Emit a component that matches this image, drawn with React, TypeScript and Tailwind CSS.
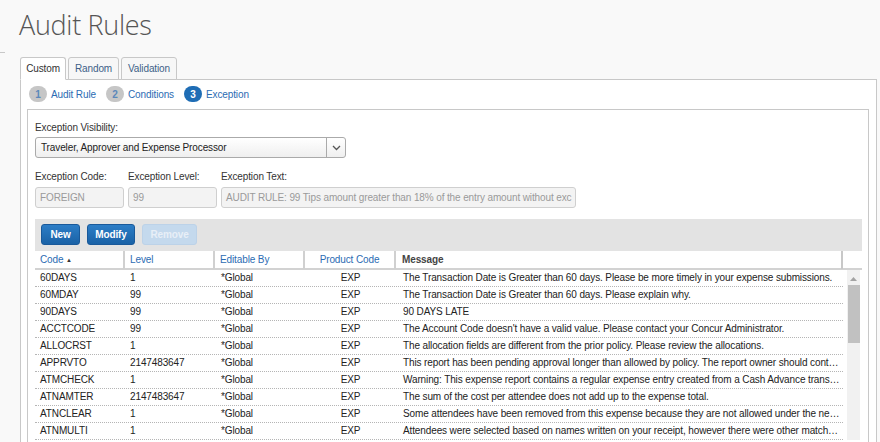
import React from "react";

type Rule = {
  code: string;
  level: string;
  editableBy: string;
  product: string;
  message: string;
};

const RULES: Rule[] = [
  { code: "60DAYS", level: "1", editableBy: "*Global", product: "EXP", message: "The Transaction Date is Greater than 60 days. Please be more timely in your expense submissions." },
  { code: "60MDAY", level: "99", editableBy: "*Global", product: "EXP", message: "The Transaction Date is Greater than 60 days. Please explain why." },
  { code: "90DAYS", level: "99", editableBy: "*Global", product: "EXP", message: "90 DAYS LATE" },
  { code: "ACCTCODE", level: "99", editableBy: "*Global", product: "EXP", message: "The Account Code doesn't have a valid value. Please contact your Concur Administrator." },
  { code: "ALLOCRST", level: "1", editableBy: "*Global", product: "EXP", message: "The allocation fields are different from the prior policy. Please review the allocations." },
  { code: "APPRVTO", level: "2147483647", editableBy: "*Global", product: "EXP", message: "This report has been pending approval longer than allowed by policy. The report owner should cont…" },
  { code: "ATMCHECK", level: "1", editableBy: "*Global", product: "EXP", message: "Warning: This expense report contains a regular expense entry created from a Cash Advance trans…" },
  { code: "ATNAMTER", level: "2147483647", editableBy: "*Global", product: "EXP", message: "The sum of the cost per attendee does not add up to the expense total." },
  { code: "ATNCLEAR", level: "1", editableBy: "*Global", product: "EXP", message: "Some attendees have been removed from this expense because they are not allowed under the ne…" },
  { code: "ATNMULTI", level: "1", editableBy: "*Global", product: "EXP", message: "Attendees were selected based on names written on your receipt, however there were other match…" },
];

const COLS = "grid grid-cols-[90px_90px_90px_91px_447px]";

function Step({ n, label, active }: { n: number; label: string; active?: boolean }) {
  return (
    <div className="flex items-center gap-[4px]">
      <span
        className={
          active
            ? "flex h-[16px] w-[18px] items-center justify-center rounded-full bg-[#1f6db5] text-[10px] font-bold text-white"
            : "flex h-[16px] w-[18px] items-center justify-center rounded-full bg-[#c6c6c6] text-[10px] font-bold text-[#5b88ba]"
        }
      >
        {n}
      </span>
      <span className="text-[#2b6cb3]">{label}</span>
    </div>
  );
}

function Tab({ label, active, w }: { label: string; active?: boolean; w: string }) {
  return (
    <div
      className={
        (active
          ? "relative bg-white border-b-white text-[#333] "
          : "bg-[#f7f7f7] text-[#3d5f87] ") +
        w +
        " h-[23px] border border-[#c8c8c8] rounded-t-[3px] text-center leading-[22px]"
      }
    >
      {label}
    </div>
  );
}

function App() {
  return (
    <div className="h-[442px] overflow-hidden bg-[#f9f9f9] font-['Liberation_Sans',Arial,sans-serif] text-[10px] tracking-[-0.12px] text-[#333]">
      {/* Title */}
      <div className="h-[52px] pl-[19px] pt-[8px]">
        <h1 className="font-['Open_Sans',sans-serif] text-[27px] font-light leading-[34px] tracking-[-0.3px] text-[#555]">
          Audit Rules
        </h1>
      </div>
      <div className="h-px w-[5px] bg-[#c8c8c8]" />

      {/* Tabs */}
      <div className="relative z-10 -mb-px mt-[4px] ml-[20px] flex gap-[2px]">
        <Tab label="Custom" active w="w-[46px]" />
        <Tab label="Random" w="w-[51px]" />
        <Tab label="Validation" w="w-[56px]" />
      </div>

      <div className="ml-[20px] h-[400px] w-[857px] border border-[#c8c8c8] bg-white">
        {/* Steps */}
        <div className="flex h-[29px] items-center gap-[10px] pb-[1px] pl-[8px]">
          <Step n={1} label="Audit Rule" />
          <Step n={2} label="Conditions" />
          <Step n={3} label="Exception" active />
        </div>

        <div className="ml-[6px] h-[400px] w-[842px] border border-[#c8c8c8] pl-[7px] pt-[11px]">
          <div className="leading-[14px]">Exception Visibility:</div>
          <div className="mt-[2px] flex h-[21px] w-[311px] rounded-[3px] border border-[#aaa] bg-linear-to-b from-white to-[#efefef]">
            <div className="flex-1 pl-[5px] leading-[19px] text-[#222]">
              Traveler, Approver and Expense Processor
            </div>
            <div className="flex w-[19px] items-center justify-center border-l border-[#aaa]">
              <svg width="9" height="6" viewBox="0 0 9 6" fill="none">
                <path d="M1 1l3.5 3.5L8 1" stroke="#555" strokeWidth="1.3" />
              </svg>
            </div>
          </div>

          <div className="mt-[12px] flex gap-[4px] leading-[14px]">
            <div className="w-[89px]">Exception Code:</div>
            <div className="w-[89px]">Exception Level:</div>
            <div className="w-[355px]">Exception Text:</div>
          </div>
          <div className="mt-[3px] flex gap-[4px]">
            <div className="h-[21px] w-[89px] rounded-[3px] border border-[#cfcfcf] bg-[#f3f3f3] pl-[4px] leading-[19px] text-[#9a9a9a]">
              FOREIGN
            </div>
            <div className="h-[21px] w-[89px] rounded-[3px] border border-[#cfcfcf] bg-[#f3f3f3] pl-[4px] leading-[19px] text-[#9a9a9a]">
              99
            </div>
            <div className="h-[21px] w-[355px] overflow-hidden whitespace-nowrap rounded-[3px] border border-[#cfcfcf] bg-[#f3f3f3] pl-[4px] leading-[19px] text-[#9a9a9a]">
              AUDIT RULE: 99 Tips amount greater than 18% of the entry amount without exc
            </div>
          </div>

          {/* Toolbar */}
          <div className="mt-[11px] flex h-[32px] w-[827px] items-start gap-[7px] bg-[#e3e3e3] pl-[6px] pt-[5px]">
            <button className="h-[21px] w-[39px] rounded-[3px] border border-[#19599a] bg-linear-to-b from-[#2c7dc6] to-[#1a62a6] font-bold text-white">
              New
            </button>
            <button className="h-[21px] w-[48px] rounded-[3px] border border-[#19599a] bg-linear-to-b from-[#2c7dc6] to-[#1a62a6] font-bold text-white">
              Modify
            </button>
            <button className="h-[21px] w-[55px] rounded-[3px] border border-[#bcd2e8] bg-[#c4d9ed] font-bold text-[#e8eff7]">
              Remove
            </button>
          </div>

          {/* Header */}
          <div className="flex w-[827px]">
            <div className={COLS + " h-[19px] border-b-2 border-[#d2d2d2] leading-[17px]"}>
              <div className="border-r-2 border-[#d0d0d0] pl-[5px] text-[#2b6cb3]">
                Code <span className="align-[1px] text-[6px] text-[#333]">▲</span>
              </div>
              <div className="border-r-2 border-[#d0d0d0] pl-[5px] text-[#2b6cb3]">Level</div>
              <div className="border-r-2 border-[#d0d0d0] pl-[5px] text-[#2b6cb3]">Editable By</div>
              <div className="border-r-2 border-[#d0d0d0] text-center text-[#2b6cb3]">Product Code</div>
              <div className="border-r-2 border-[#c8c8c8] pl-[6px] font-bold text-[#444]">Message</div>
            </div>
            <div className="h-[19px] flex-1 border-b-2 border-[#d2d2d2]" />
          </div>

          {/* Rows */}
          <div className="flex w-[827px]">
            <div className="w-[808px]">
              {RULES.map((r) => (
                <div
                  key={r.code}
                  className={COLS + " h-[17px] border-b border-dotted border-[#b5b5b5] leading-[16px] text-[#222]"}
                >
                  <div className="pl-[5px]">{r.code}</div>
                  <div className="pl-[5px]">{r.level}</div>
                  <div className="pl-[6px]">{r.editableBy}</div>
                  <div className="text-center">{r.product}</div>
                  <div className="whitespace-nowrap pl-[7px]">{r.message}</div>
                </div>
              ))}
            </div>
            <div className="ml-[4px] flex w-[13px] flex-col items-center bg-[#f1f1f1]">
              <svg width="7" height="4" viewBox="0 0 7 4" className="mt-[7px]">
                <path d="M0 4L3.5 0L7 4Z" fill="#a3a3a3" />
              </svg>
              <div className="mt-[4px] h-[58px] w-[12px] bg-[#c1c1c1]" />
            </div>
          </div>
        </div>
      </div>
    </div>
  );
}

export default App;
